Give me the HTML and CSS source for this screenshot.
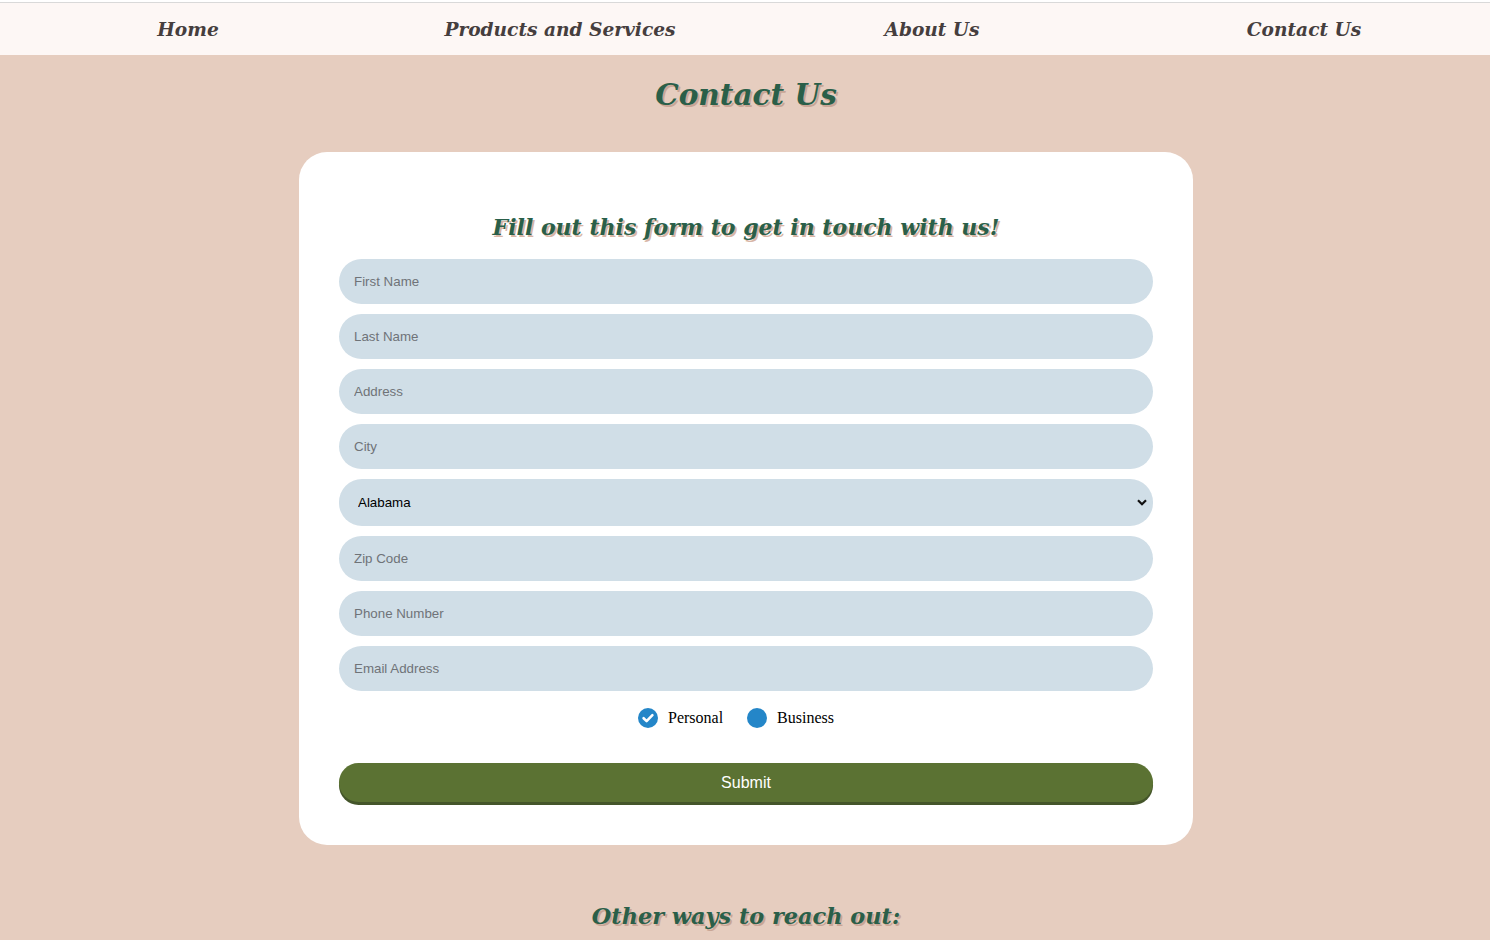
FILE: index.html
```html
<!DOCTYPE html>
<html lang="en">
<head>
<meta charset="utf-8">
<title>Contact Us</title>
<link rel="stylesheet" href="styles.css">
</head>
<body>
<div class="top">
  <nav class="nav">
    <a class="nav-link" href="#">Home</a>
    <a class="nav-link" href="#">Products and Services</a>
    <a class="nav-link" href="#">About Us</a>
    <a class="nav-link" href="#">Contact Us</a>
  </nav>
</div>
<main class="main">
  <h1 class="title">Contact Us</h1>
  <section class="card">
    <h2 class="subtitle">Fill out this form to get in touch with us!</h2>
    <form class="form">
      <input class="field" type="text" placeholder="First Name">
      <input class="field" type="text" placeholder="Last Name">
      <input class="field" type="text" placeholder="Address">
      <input class="field" type="text" placeholder="City">
      <div class="select-wrap">
        <select class="field select">
          <option>Alabama</option>
          <option>Alaska</option>
          <option>Arizona</option>
        </select>
        <svg class="chev" width="10" height="7" viewBox="0 0 10 7"><path d="M1 1.2 L5 5.2 L9 1.2" fill="none" stroke="#111" stroke-width="2.2"/></svg>
      </div>
      <input class="field" type="text" placeholder="Zip Code">
      <input class="field" type="text" placeholder="Phone Number">
      <input class="field" type="text" placeholder="Email Address">
      <div class="radios">
        <label class="radio">
          <svg class="radio-icon" width="20" height="20" viewBox="0 0 20 20"><circle cx="10" cy="10" r="10" fill="#2486c8"/><path d="M5.6 10.2 L8.6 13.1 L14.4 7.2" fill="none" stroke="#fff" stroke-width="2.6" stroke-linecap="round" stroke-linejoin="round"/></svg>
          <span>Personal</span>
        </label>
        <label class="radio">
          <svg class="radio-icon" width="20" height="20" viewBox="0 0 20 20"><circle cx="10" cy="10" r="10" fill="#2486c8"/></svg>
          <span>Business</span>
        </label>
      </div>
      <button class="submit" type="button">Submit</button>
    </form>
  </section>
  <h2 class="other">Other ways to reach out:</h2>
</main>
</body>
</html>
```
FILE: styles.css
```css
html, body {
  margin: 0;
  padding: 0;
}
body {
  background: #e6cdbf;
  font-family: "DejaVu Serif", Georgia, serif;
}
.top {
  background: #ffffff;
  padding-top: 2px;
}
.nav {
  display: grid;
  grid-template-columns: repeat(4, 1fr);
  background: #fdf7f5;
  border-top: 1px solid #d9d9d9;
  height: 52px;
  align-items: center;
  padding-left: 2px;
}
.nav-link {
  text-align: center;
  font-family: "DejaVu Serif", serif;
  font-weight: bold;
  font-style: italic;
  font-size: 18.6px;
  color: #463e3e;
  text-decoration: none;
  padding-top: 1px;
}
.main {
  display: flex;
  flex-direction: column;
  align-items: center;
  padding-left: 2px;
}
.title {
  margin: 22px 0 0;
  font-family: "DejaVu Serif", serif;
  font-weight: bold;
  font-style: italic;
  font-size: 29.5px;
  line-height: 36px;
  color: #2a5f49;
  text-shadow: 2px 2px 0 #c9a696;
}
.card {
  margin-top: 39px;
  width: 894px;
  box-sizing: border-box;
  background: #ffffff;
  border-radius: 28px;
  padding: 60px 40px 40px;
}
.subtitle {
  margin: 0 0 17px;
  text-align: center;
  font-family: "DejaVu Serif", serif;
  font-weight: bold;
  font-style: italic;
  font-size: 22px;
  line-height: 30px;
  color: #2a5f49;
  text-shadow: 2px 2px 0 #d8b6a6;
}
.form {
  display: flex;
  flex-direction: column;
  gap: 10px;
}
.field {
  display: block;
  width: 100%;
  box-sizing: border-box;
  height: 45px;
  border: none;
  border-radius: 23px;
  background: #d0dee7;
  padding: 0 15px;
  font-family: "Liberation Sans", Arial, sans-serif;
  font-size: 13.33px;
  color: #000;
  outline: none;
}
.field::placeholder {
  color: #6f7378;
}
.select-wrap {
  position: relative;
}
.select {
  appearance: none;
  -webkit-appearance: none;
  height: 47px;
  padding-left: 19px;
}
.chev {
  position: absolute;
  right: 6px;
  top: 20px;
  pointer-events: none;
}
.radios {
  display: flex;
  justify-content: center;
  gap: 24px;
  margin-top: 7px;
  height: 32px;
  align-items: flex-start;
  padding-right: 20px;
}
.radio {
  display: flex;
  align-items: center;
  gap: 10px;
  font-family: "Liberation Serif", "Times New Roman", serif;
  font-size: 16px;
  color: #000;
}
.radio-icon {
  display: block;
}
.submit {
  margin-top: 13px;
  height: 39px;
  width: 100%;
  border: none;
  border-radius: 20px;
  background: #5b7233;
  box-shadow: 0 3px 0 #44552a;
  color: #fff;
  font-family: "Liberation Sans", Arial, sans-serif;
  font-size: 16px;
  margin-bottom: 3px;
}
.other {
  margin: 56px 0 0;
  font-family: "DejaVu Serif", serif;
  font-weight: bold;
  font-style: italic;
  font-size: 22.4px;
  line-height: 30px;
  color: #2a5f49;
  text-shadow: 2px 2px 0 #c9a696;
}
```
